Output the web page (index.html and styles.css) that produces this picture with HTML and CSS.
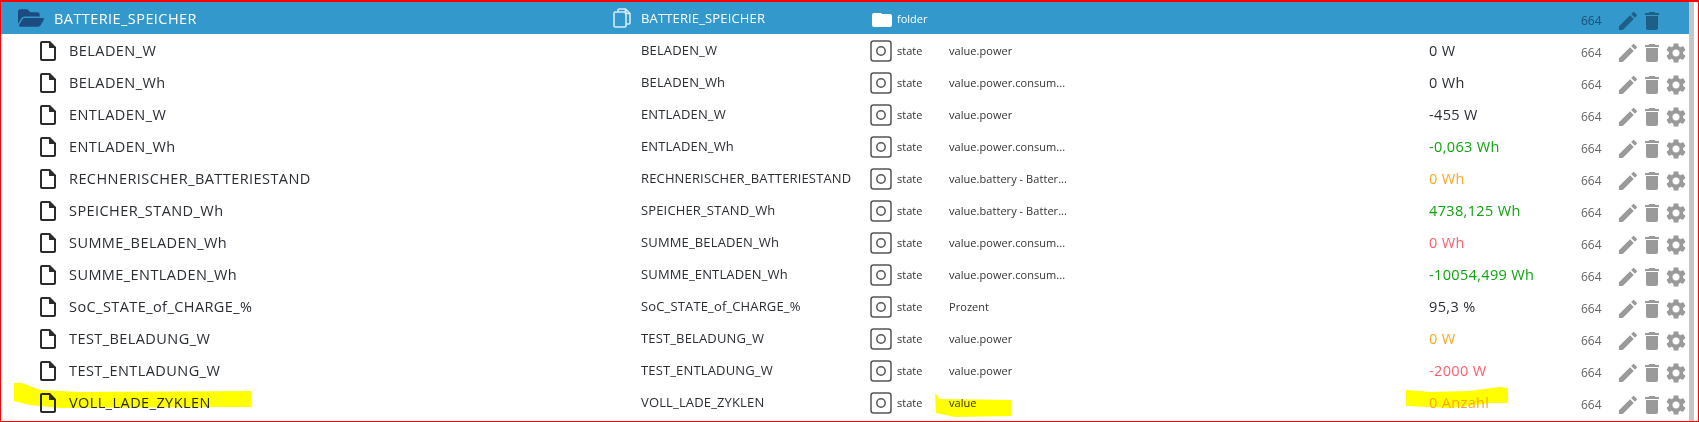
FILE: index.html
```html
<!DOCTYPE html>
<html lang="de">
<head>
<meta charset="utf-8">
<title>BATTERIE_SPEICHER</title>
<link rel="stylesheet" href="styles.css">
</head>
<body>
<svg class="defs" width="0" height="0" aria-hidden="true">
  <symbol id="i-pen" viewBox="0 0 24 24"><path d="M3 17.25V21h3.75L17.81 9.94l-3.75-3.75L3 17.25zM20.71 7.04c.39-.39.39-1.02 0-1.41l-2.34-2.34c-.39-.39-1.02-.39-1.41 0l-1.83 1.83 3.75 3.75 1.83-1.83z"/></symbol>
  <symbol id="i-del" viewBox="0 0 24 24"><path d="M6 19c0 1.1.9 2 2 2h8c1.1 0 2-.9 2-2V7H6v12zM19 4h-3.5l-1-1h-5l-1 1H5v2h14V4z"/></symbol>
  <symbol id="i-gear" viewBox="0 0 24 24"><path d="M19.14,12.94c0.04-0.3,0.06-0.61,0.06-0.94c0-0.32-0.02-0.64-0.07-0.94l2.03-1.58c0.18-0.14,0.23-0.41,0.12-0.61 l-1.92-3.32c-0.12-0.22-0.37-0.29-0.59-0.22l-2.39,0.96c-0.5-0.38-1.03-0.7-1.62-0.94L14.4,2.81c-0.04-0.24-0.24-0.41-0.48-0.41 h-3.84c-0.24,0-0.43,0.17-0.47,0.41L9.25,5.35C8.66,5.59,8.12,5.92,7.63,6.29L5.24,5.33c-0.22-0.08-0.47,0-0.59,0.22L2.74,8.87 C2.62,9.08,2.66,9.34,2.86,9.48l2.03,1.58C4.84,11.36,4.8,11.69,4.8,12s0.02,0.64,0.07,0.94l-2.03,1.58 c-0.18,0.14-0.23,0.41-0.12,0.61l1.92,3.32c0.12,0.22,0.37,0.29,0.59,0.22l2.39-0.96c0.5,0.38,1.03,0.7,1.62,0.94l0.36,2.54 c0.05,0.24,0.24,0.41,0.48,0.41h3.84c0.24,0,0.44-0.17,0.47-0.41l0.36-2.54c0.59-0.24,1.13-0.56,1.62-0.94l2.39,0.96 c0.22,0.08,0.47,0,0.59-0.22l1.92-3.32c0.12-0.22,0.07-0.47-0.12-0.61L19.14,12.94z M12,15.6c-1.98,0-3.6-1.62-3.6-3.6 s1.62-3.6,3.6-3.6s3.6,1.62,3.6,3.6S13.98,15.6,12,15.6z"/></symbol>
  <symbol id="i-file" viewBox="0 0 24 24"><path d="M14 2H6c-1.1 0-2 .9-2 2v16c0 1.1.9 2 2 2h12c1.1 0 2-.9 2-2V8l-6-6zM6 20V4h7v5h5v11H6z"/></symbol>
  <symbol id="i-state" viewBox="0 0 22 22"><rect x="1" y="1" width="20" height="20" rx="2.5" fill="none" stroke="currentColor" stroke-width="1.5"/><circle cx="11" cy="11" r="4.2" fill="none" stroke="currentColor" stroke-width="1.5"/></symbol>
</svg>
<div class="frame">
  <main class="table">
    <div class="row head">
      <div class="name"><svg class="ic-folder-open" viewBox="0 0 576 512"><path d="M572.694 292.093L500.27 416.248A63.997 63.997 0 0 1 444.989 448H45.025c-18.523 0-30.064-20.093-20.731-36.093l72.424-124.155A64 64 0 0 1 152 256h399.964c18.523 0 30.064 20.093 20.73 36.093zM152 224h328v-48c0-26.51-21.49-48-48-48H272l-64-64H48C21.49 64 0 85.49 0 112v278.046l69.077-118.418C86.214 242.25 118.62 224 152 224z"/></svg><span>BATTERIE_SPEICHER</span></div>
      <div class="copy"><svg class="ic-copy" viewBox="0 0 18 20"><path d="M5 3.500V2.200C5 1.500 5.500 1 6.200 1h6.300L17 5.500V14.800c0 .7-.5 1.200-1.200 1.200H13M12.500 1v4.500H17"/><path d="M2.200 4H11.800C12.500 4 13 4.500 13 5.200V17.800C13 18.500 12.500 19 11.800 19H2.200C1.500 19 1 18.500 1 17.800V5.200C1 4.500 1.500 4 2.200 4Z"/></svg></div>
      <div class="id">BATTERIE_SPEICHER</div>
      <div class="ticon"><svg class="ic-24 white" viewBox="0 0 24 24"><path d="M10 6H4c-1.100 0-2 .9-2 2v10c0 1.100.9 2 2 2h16c1.100 0 2-.9 2-2V9c0-1.100-.9-2-2-2h-8l-1-1z"/></svg></div>
      <div class="type">folder</div>
      <div class="role"></div>
      <div class="value"></div>
      <div class="acl">664</div>
      <div class="act"><svg class="ic-24"><use href="#i-pen"/></svg><svg class="ic-24"><use href="#i-del"/></svg></div>
    </div>

    <div class="row">
      <div class="name"><svg class="ic-24 file"><use href="#i-file"/></svg><span>BELADEN_W</span></div>
      <div class="copy"></div><div class="id">BELADEN_W</div>
      <div class="ticon"><svg class="ic-state"><use href="#i-state"/></svg></div><div class="type">state</div>
      <div class="role">value.power</div><div class="value">0 W</div><div class="acl">664</div>
      <div class="act"><svg class="ic-24"><use href="#i-pen"/></svg><svg class="ic-24"><use href="#i-del"/></svg><svg class="ic-24"><use href="#i-gear"/></svg></div>
    </div>
    <div class="row">
      <div class="name"><svg class="ic-24 file"><use href="#i-file"/></svg><span>BELADEN_Wh</span></div>
      <div class="copy"></div><div class="id">BELADEN_Wh</div>
      <div class="ticon"><svg class="ic-state"><use href="#i-state"/></svg></div><div class="type">state</div>
      <div class="role">value.power.consum...</div><div class="value">0 Wh</div><div class="acl">664</div>
      <div class="act"><svg class="ic-24"><use href="#i-pen"/></svg><svg class="ic-24"><use href="#i-del"/></svg><svg class="ic-24"><use href="#i-gear"/></svg></div>
    </div>
    <div class="row">
      <div class="name"><svg class="ic-24 file"><use href="#i-file"/></svg><span>ENTLADEN_W</span></div>
      <div class="copy"></div><div class="id">ENTLADEN_W</div>
      <div class="ticon"><svg class="ic-state"><use href="#i-state"/></svg></div><div class="type">state</div>
      <div class="role">value.power</div><div class="value">-455 W</div><div class="acl">664</div>
      <div class="act"><svg class="ic-24"><use href="#i-pen"/></svg><svg class="ic-24"><use href="#i-del"/></svg><svg class="ic-24"><use href="#i-gear"/></svg></div>
    </div>
    <div class="row">
      <div class="name"><svg class="ic-24 file"><use href="#i-file"/></svg><span>ENTLADEN_Wh</span></div>
      <div class="copy"></div><div class="id">ENTLADEN_Wh</div>
      <div class="ticon"><svg class="ic-state"><use href="#i-state"/></svg></div><div class="type">state</div>
      <div class="role">value.power.consum...</div><div class="value green">-0,063 Wh</div><div class="acl">664</div>
      <div class="act"><svg class="ic-24"><use href="#i-pen"/></svg><svg class="ic-24"><use href="#i-del"/></svg><svg class="ic-24"><use href="#i-gear"/></svg></div>
    </div>
    <div class="row">
      <div class="name"><svg class="ic-24 file"><use href="#i-file"/></svg><span>RECHNERISCHER_BATTERIESTAND</span></div>
      <div class="copy"></div><div class="id">RECHNERISCHER_BATTERIESTAND</div>
      <div class="ticon"><svg class="ic-state"><use href="#i-state"/></svg></div><div class="type">state</div>
      <div class="role">value.battery - Batter...</div><div class="value orange">0 Wh</div><div class="acl">664</div>
      <div class="act"><svg class="ic-24"><use href="#i-pen"/></svg><svg class="ic-24"><use href="#i-del"/></svg><svg class="ic-24"><use href="#i-gear"/></svg></div>
    </div>
    <div class="row">
      <div class="name"><svg class="ic-24 file"><use href="#i-file"/></svg><span>SPEICHER_STAND_Wh</span></div>
      <div class="copy"></div><div class="id">SPEICHER_STAND_Wh</div>
      <div class="ticon"><svg class="ic-state"><use href="#i-state"/></svg></div><div class="type">state</div>
      <div class="role">value.battery - Batter...</div><div class="value green">4738,125 Wh</div><div class="acl">664</div>
      <div class="act"><svg class="ic-24"><use href="#i-pen"/></svg><svg class="ic-24"><use href="#i-del"/></svg><svg class="ic-24"><use href="#i-gear"/></svg></div>
    </div>
    <div class="row">
      <div class="name"><svg class="ic-24 file"><use href="#i-file"/></svg><span>SUMME_BELADEN_Wh</span></div>
      <div class="copy"></div><div class="id">SUMME_BELADEN_Wh</div>
      <div class="ticon"><svg class="ic-state"><use href="#i-state"/></svg></div><div class="type">state</div>
      <div class="role">value.power.consum...</div><div class="value red">0 Wh</div><div class="acl">664</div>
      <div class="act"><svg class="ic-24"><use href="#i-pen"/></svg><svg class="ic-24"><use href="#i-del"/></svg><svg class="ic-24"><use href="#i-gear"/></svg></div>
    </div>
    <div class="row">
      <div class="name"><svg class="ic-24 file"><use href="#i-file"/></svg><span>SUMME_ENTLADEN_Wh</span></div>
      <div class="copy"></div><div class="id">SUMME_ENTLADEN_Wh</div>
      <div class="ticon"><svg class="ic-state"><use href="#i-state"/></svg></div><div class="type">state</div>
      <div class="role">value.power.consum...</div><div class="value green">-10054,499 Wh</div><div class="acl">664</div>
      <div class="act"><svg class="ic-24"><use href="#i-pen"/></svg><svg class="ic-24"><use href="#i-del"/></svg><svg class="ic-24"><use href="#i-gear"/></svg></div>
    </div>
    <div class="row">
      <div class="name"><svg class="ic-24 file"><use href="#i-file"/></svg><span>SoC_STATE_of_CHARGE_%</span></div>
      <div class="copy"></div><div class="id">SoC_STATE_of_CHARGE_%</div>
      <div class="ticon"><svg class="ic-state"><use href="#i-state"/></svg></div><div class="type">state</div>
      <div class="role">Prozent</div><div class="value">95,3 %</div><div class="acl">664</div>
      <div class="act"><svg class="ic-24"><use href="#i-pen"/></svg><svg class="ic-24"><use href="#i-del"/></svg><svg class="ic-24"><use href="#i-gear"/></svg></div>
    </div>
    <div class="row">
      <div class="name"><svg class="ic-24 file"><use href="#i-file"/></svg><span>TEST_BELADUNG_W</span></div>
      <div class="copy"></div><div class="id">TEST_BELADUNG_W</div>
      <div class="ticon"><svg class="ic-state"><use href="#i-state"/></svg></div><div class="type">state</div>
      <div class="role">value.power</div><div class="value orange">0 W</div><div class="acl">664</div>
      <div class="act"><svg class="ic-24"><use href="#i-pen"/></svg><svg class="ic-24"><use href="#i-del"/></svg><svg class="ic-24"><use href="#i-gear"/></svg></div>
    </div>
    <div class="row">
      <div class="name"><svg class="ic-24 file"><use href="#i-file"/></svg><span>TEST_ENTLADUNG_W</span></div>
      <div class="copy"></div><div class="id">TEST_ENTLADUNG_W</div>
      <div class="ticon"><svg class="ic-state"><use href="#i-state"/></svg></div><div class="type">state</div>
      <div class="role">value.power</div><div class="value red">-2000 W</div><div class="acl">664</div>
      <div class="act"><svg class="ic-24"><use href="#i-pen"/></svg><svg class="ic-24"><use href="#i-del"/></svg><svg class="ic-24"><use href="#i-gear"/></svg></div>
    </div>
    <div class="row">
      <div class="name"><svg class="ic-24 file"><use href="#i-file"/></svg><span>VOLL_LADE_ZYKLEN</span></div>
      <div class="copy"></div><div class="id">VOLL_LADE_ZYKLEN</div>
      <div class="ticon"><svg class="ic-state"><use href="#i-state"/></svg></div><div class="type">state</div>
      <div class="role">value</div><div class="value orange">0 Anzahl</div><div class="acl">664</div>
      <div class="act"><svg class="ic-24"><use href="#i-pen"/></svg><svg class="ic-24"><use href="#i-del"/></svg><svg class="ic-24"><use href="#i-gear"/></svg></div>
    </div>
  </main>
  <div class="scrollbar"></div>
  <svg class="marker" viewBox="0 0 1699 422" aria-hidden="true">
    <path d="M14 383L22 383L40 390L80 392L251 391L251 407L215 407L60 408L30 405L14 401Z"/>
    <path d="M935 393L940 399L1011 400L1011 416L955 417L936 413Z"/>
    <path d="M1406 390L1430 392L1470 391L1500 387L1508 388L1508 403L1490 403L1450 408L1406 406Z"/>
  </svg>
</div>
</body>
</html>
```

FILE: styles.css
```css
* { box-sizing: border-box; }
html, body { margin: 0; padding: 0; background: #fff; }
body {
  width: 1699px;
  height: 422px;
  overflow: hidden;
  font-family: "Open Sans", "Noto Sans", sans-serif;
  color: #2a2e33;
}
.defs { position: absolute; }
.frame {
  position: relative;
  width: 1699px;
  height: 422px;
  display: flex;
  align-items: flex-start;
  border-style: solid;
  border-color: #ff0000;
  border-width: 2px 1px 1px 1px;
  padding-right: 4px;
}
.table { width: 1688px; flex: none; }
.scrollbar { width: 5px; height: 419px; background: #c6c6c6; flex: none; }
.row {
  display: grid;
  grid-template-columns: 608px 32px 229px 27px 52px 480px 152px 38px 70px;
  height: 32px;
  align-items: center;
}
.row > div { min-width: 0; white-space: nowrap; }
.name { display: flex; align-items: center; font-size: 14.5px; letter-spacing: 0.43px; padding-left: 35px; }
.name span { margin-left: 9px; }
.id { font-size: 13px; letter-spacing: 0.15px; }
.type, .role { font-size: 11px; padding-top: 1px; color: #333; }
.role { letter-spacing: 0.05px; }
.value { font-size: 14.5px; letter-spacing: 0.35px; }
.acl { font-size: 12px; color: #666; padding-top: 4px; }
.act { display: flex; align-items: center; padding-top: 6px; margin-left: -3px; }
.ticon, .copy { display: flex; align-items: center; }
.ic-24 { width: 24px; height: 24px; fill: #9a9a9a; flex: none; }
.file { fill: #2b2b2b; margin-top: 2px; }
.ic-state { width: 22px; height: 22px; color: #555; margin-top: 2px; }
.green { color: #0ea50e; }
.orange { color: #ffa726; }
.red { color: #ff5f6d; }

.head { background: #3399cc; color: #fff; }
.head .name { padding-left: 17px; }
.head .name span { margin-left: 10px; }
.head .acl { color: #1a4f73; }
.head .act .ic-24 { fill: #1f5f85; }
.head .type { color: #fff; }
.ic-folder-open { width: 26px; height: 24px; fill: #1b4b80; flex: none; }
.ic-copy { width: 18px; height: 20px; margin-left: 4px; fill: none; stroke: #d8ecf6; stroke-width: 1.6; flex: none; }
.white { fill: #fff; margin-top: 2px; }

.marker {
  position: absolute;
  left: -1px;
  top: -2px;
  width: 1699px;
  height: 422px;
  mix-blend-mode: multiply;
  pointer-events: none;
}
.marker path { fill: #ffff00; }
```
